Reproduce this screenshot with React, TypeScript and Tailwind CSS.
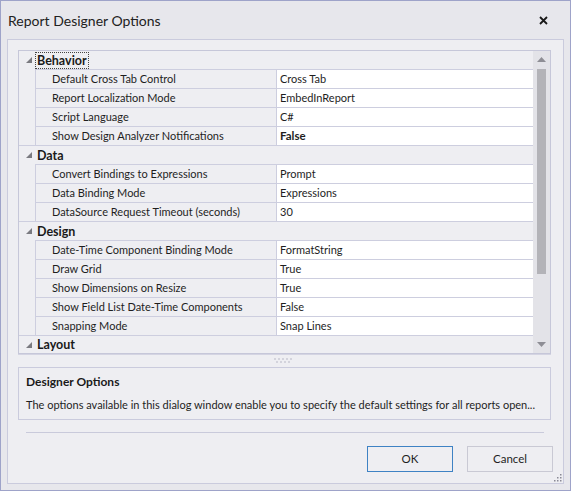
import React from "react";

type Prop = { name: string; value: string; bold?: boolean };
type Cat = { title: string; props: Prop[] };

const cats: Cat[] = [
  {
    title: "Behavior",
    props: [
      { name: "Default Cross Tab Control", value: "Cross Tab" },
      { name: "Report Localization Mode", value: "EmbedInReport" },
      { name: "Script Language", value: "C#" },
      { name: "Show Design Analyzer Notifications", value: "False", bold: true },
    ],
  },
  {
    title: "Data",
    props: [
      { name: "Convert Bindings to Expressions", value: "Prompt" },
      { name: "Data Binding Mode", value: "Expressions" },
      { name: "DataSource Request Timeout (seconds)", value: "30" },
    ],
  },
  {
    title: "Design",
    props: [
      { name: "Date-Time Component Binding Mode", value: "FormatString" },
      { name: "Draw Grid", value: "True" },
      { name: "Show Dimensions on Resize", value: "True" },
      { name: "Show Field List Date-Time Components", value: "False" },
      { name: "Snapping Mode", value: "Snap Lines" },
    ],
  },
];

function Tri() {
  return (
    <svg width="6" height="6" viewBox="0 0 6 6" className="block">
      <polygon points="6,0 6,6 0,6" fill="#7a7a80" />
    </svg>
  );
}

function Header({ title, focused, first }: { title: string; focused?: boolean; first?: boolean }) {
  return (
    <div
      className={
        "flex items-center " +
        (first ? "h-[18px]" : "h-[19px] border-t border-[#cdcedf]")
      }
    >
      <div className="flex w-[16px] shrink-0 justify-end pr-[3px]">
        <Tri />
      </div>
      <span
        className={
          "ml-[1px] px-[1px] text-[12.5px] font-bold leading-[15px] text-[#1a1a1a] " +
          (focused ? "outline outline-1 outline-dotted outline-[#444]" : "")
        }
      >
        {title}
      </span>
    </div>
  );
}

function Row({ p }: { p: Prop }) {
  return (
    <div className="flex h-[19px]">
      <div className="w-[16px] shrink-0" />
      <div className="flex flex-1 border-t border-[#cdcedf]">
        <div className="flex w-[241px] shrink-0 items-center border-l border-[#cdcedf] pl-[16px] text-[#1e1e1e]">
          {p.name}
        </div>
        <div
          className={
            "flex flex-1 items-center border-l border-[#cdcedf] bg-white pl-[3px] text-[#1e1e1e] " +
            (p.bold ? "text-[11.5px] font-bold" : "")
          }
        >
          {p.value}
        </div>
      </div>
    </div>
  );
}

function Grip() {
  const dots: [number, number][] = [];
  for (let i = 0; i < 5; i++) dots.push([1 + i * 4, 1]);
  for (let i = 0; i < 4; i++) dots.push([3 + i * 4, 4]);
  return (
    <svg width="19" height="6" viewBox="0 0 19 6" className="block">
      {dots.map(([x, y], i) => (
        <rect key={i} x={x - 0.5} y={y - 0.5} width="1" height="1" fill="#85859a" />
      ))}
    </svg>
  );
}

function SizeGrip() {
  const pts: [number, number][] = [
    [6, 0],
    [3, 3],
    [6, 3],
    [0, 6],
    [3, 6],
    [6, 6],
  ];
  return (
    <svg width="8" height="8" viewBox="0 0 8 8" className="block">
      {pts.map(([x, y], i) => (
        <rect key={i} x={x} y={y} width="1.5" height="1.5" fill="#8a8a96" />
      ))}
    </svg>
  );
}

export default function App() {
  return (
    <div className="flex h-[491px] w-[571px] flex-col border border-[#9ea3c9] bg-[#e7e7ec] font-['Lato','Segoe_UI',sans-serif] text-[11px] text-[#1e1e1e]">
      <div className="flex h-[38px] shrink-0 items-center justify-between pl-[7px] pr-[22px] pt-[1px]">
        <span className="text-[14px] text-[#222]">Report Designer Options</span>
        <svg width="9" height="9" viewBox="0 0 9 9" className="block">
          <path d="M1 1L8 8M8 1L1 8" stroke="#1a1a1a" strokeWidth="1.8" />
        </svg>
      </div>
      <div className="relative mx-[6px] flex h-[445px] flex-col border border-[#cacbdd] bg-[#eeeef2] pl-[10px] pr-[12px] pt-[10px]">
        {/* property grid */}
        <div className="flex h-[304px] shrink-0 overflow-hidden border border-[#c6c7d9] bg-[#eeeef2]">
          <div className="flex flex-1 flex-col">
            {cats.map((c, ci) => (
              <div key={c.title}>
                <Header title={c.title} focused={ci === 0} first={ci === 0} />
                {c.props.map((p) => (
                  <Row key={p.name} p={p} />
                ))}
              </div>
            ))}
            <Header title="Layout" />
          </div>
          <div className="flex w-[17px] shrink-0 flex-col items-center bg-[#e3e3e8]">
            <div className="flex h-[17px] w-full items-center justify-center">
              <svg width="9" height="5" viewBox="0 0 9 5" className="block">
                <polygon points="4.5,0 9,5 0,5" fill="#8e8e95" />
              </svg>
            </div>
            <div className="mt-[1px] h-[205px] w-[9px] bg-[#b3b3b8]" />
            <div className="flex-1" />
            <div className="flex h-[17px] w-full items-center justify-center">
              <svg width="9" height="5" viewBox="0 0 9 5" className="block">
                <polygon points="0,0 9,0 4.5,5" fill="#8e8e95" />
              </svg>
            </div>
          </div>
        </div>
        {/* splitter */}
        <div className="flex h-[13px] shrink-0 items-center justify-center border-t border-[#d4d4e2] pr-[2px]">
          <Grip />
        </div>
        {/* description */}
        <div className="flex h-[53px] shrink-0 flex-col border border-[#cacbdd] bg-[#eeeef2] pl-[7px] pt-[6px]">
          <div className="text-[12px] font-bold leading-[16px] text-[#1a1a1a]">Designer Options</div>
          <div className="mt-[7px] whitespace-nowrap leading-[16px] text-[#1e1e1e]">
            The options available in this dialog window enable you to specify the default settings for all reports open...
          </div>
        </div>
        {/* separator */}
        <div className="mt-[12px] ml-[8px] mr-[7px] h-px shrink-0 bg-[#c9cadb]" />
        {/* buttons */}
        <div className="mt-[13px] flex shrink-0 justify-end gap-[14px] mr-[-2px]">
          <button className="flex h-[26px] w-[86px] items-center justify-center border border-[#3e82c4] bg-[#eeeef2] text-[11.5px] text-[#1e1e1e]">
            OK
          </button>
          <button className="flex h-[26px] w-[86px] items-center justify-center border border-[#c9c9d4] bg-[#eeeef2] text-[11.5px] text-[#1e1e1e]">
            Cancel
          </button>
        </div>
        <div className="absolute bottom-[1px] right-[1px]">
          <SizeGrip />
        </div>
      </div>
    </div>
  );
}
